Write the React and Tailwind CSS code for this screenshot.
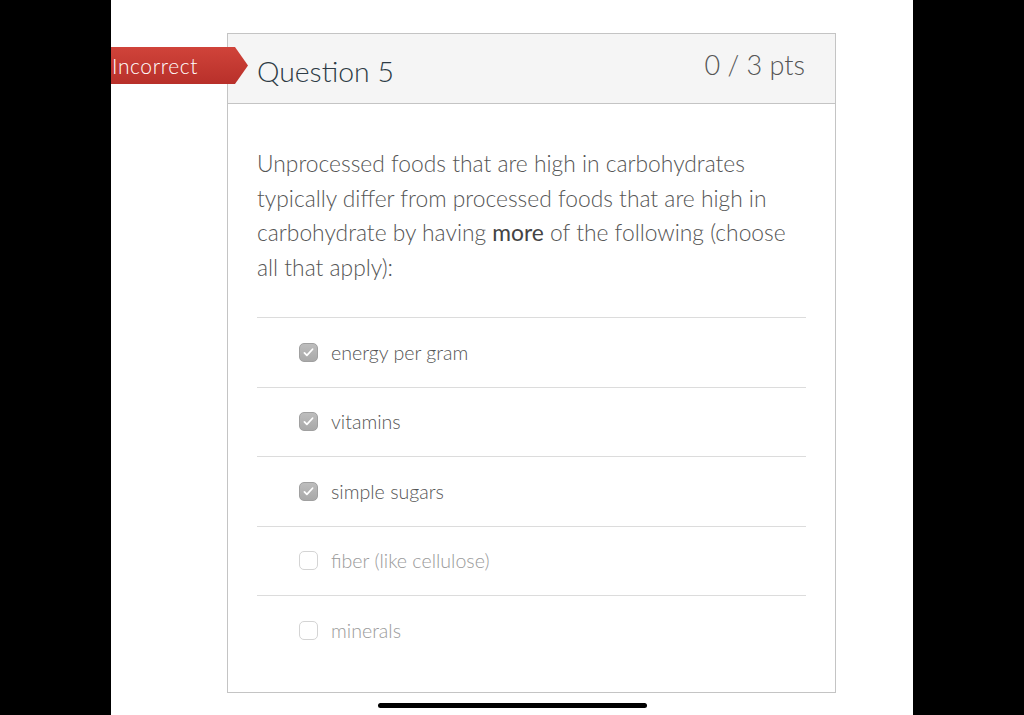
const answers = [
  { text: 'energy per gram', checked: true },
  { text: 'vitamins', checked: true },
  { text: 'simple sugars', checked: true },
  { text: 'fiber (like cellulose)', checked: false },
  { text: 'minerals', checked: false },
]

function Box({ checked }) {
  if (checked) {
    return (
      <span className="w-[19px] h-[19px] rounded-[5px] bg-gradient-to-b from-[#bdbdbd] to-[#a9a9a9] border border-[#a0a0a0] flex items-center justify-center shrink-0">
        <svg viewBox="0 0 16 16" className="w-[13px] h-[13px]">
          <path d="M3 8.5l3 3 7-7.5" fill="none" stroke="#fff" strokeWidth="2.2" strokeLinecap="round" strokeLinejoin="round" />
        </svg>
      </span>
    )
  }
  return <span className="w-[19px] h-[19px] rounded-[5px] bg-white border border-[#d4d4d4] shrink-0" />
}

export default function App() {
  return (
    <div className="w-[1024px] h-[715px] bg-black flex justify-center overflow-hidden" style={{ fontFamily: 'Lato, "Open Sans", sans-serif' }}>
      <div className="w-[802px] h-full bg-white relative pt-[33px] pl-[116px]">
        {/* incorrect banner */}
        <div className="absolute left-0 top-[47px] flex">
          <div className="h-[37px] w-[124px] bg-gradient-to-b from-[#d0433a] to-[#b8302a] text-white text-[21px] font-light tracking-[0.6px] leading-[37px] pl-[1px]">
            Incorrect
          </div>
          <svg width="13" height="37" viewBox="0 0 13 37">
            <defs>
              <linearGradient id="g" x1="0" y1="0" x2="0" y2="1">
                <stop offset="0" stopColor="#d0433a" />
                <stop offset="1" stopColor="#b8302a" />
              </linearGradient>
            </defs>
            <path d="M0 0L13 18.5L0 37Z" fill="url(#g)" />
          </svg>
        </div>

        <div className="w-[609px] h-[660px] border border-[#c4c4c4] flex flex-col">
          <div className="h-[70px] bg-[#f5f5f5] border-b border-[#c4c4c4] flex items-center justify-between pl-[29px] pr-[30px] shrink-0">
            <span className="text-[28.4px] font-light text-[#2d3b45] pt-[6px]">Question 5</span>
            <span className="text-[27px] font-light text-[#555] -mt-[6px]">0 / 3 pts</span>
          </div>
          <div className="px-[29px] pt-[42px]">
            <p className="text-[22.8px] font-light leading-[34.5px] text-[#555] pr-[2px]">
              Unprocessed foods that are high in carbohydrates typically differ from processed foods that are high in carbohydrate by having <span className="font-normal text-[#444]">more</span> of the following (choose all that apply):
            </p>
            <div className="mt-[33px] border-t border-[#dcdcdc]">
              {answers.map((a, i) => (
                <div key={a.text} className={`h-[69.5px] flex items-center gap-[13px] pl-[42px] ${i < answers.length - 1 ? 'border-b border-[#dcdcdc]' : ''}`}>
                  <Box checked={a.checked} />
                  <span className={`text-[19.6px] font-light ${a.checked ? 'text-[#555]' : 'text-[#9a9a9a]'}`}>{a.text}</span>
                </div>
              ))}
            </div>
          </div>
        </div>

        <div className="absolute left-[267px] top-[703px] w-[269px] h-[5px] rounded-full bg-black" />
      </div>
    </div>
  )
}
